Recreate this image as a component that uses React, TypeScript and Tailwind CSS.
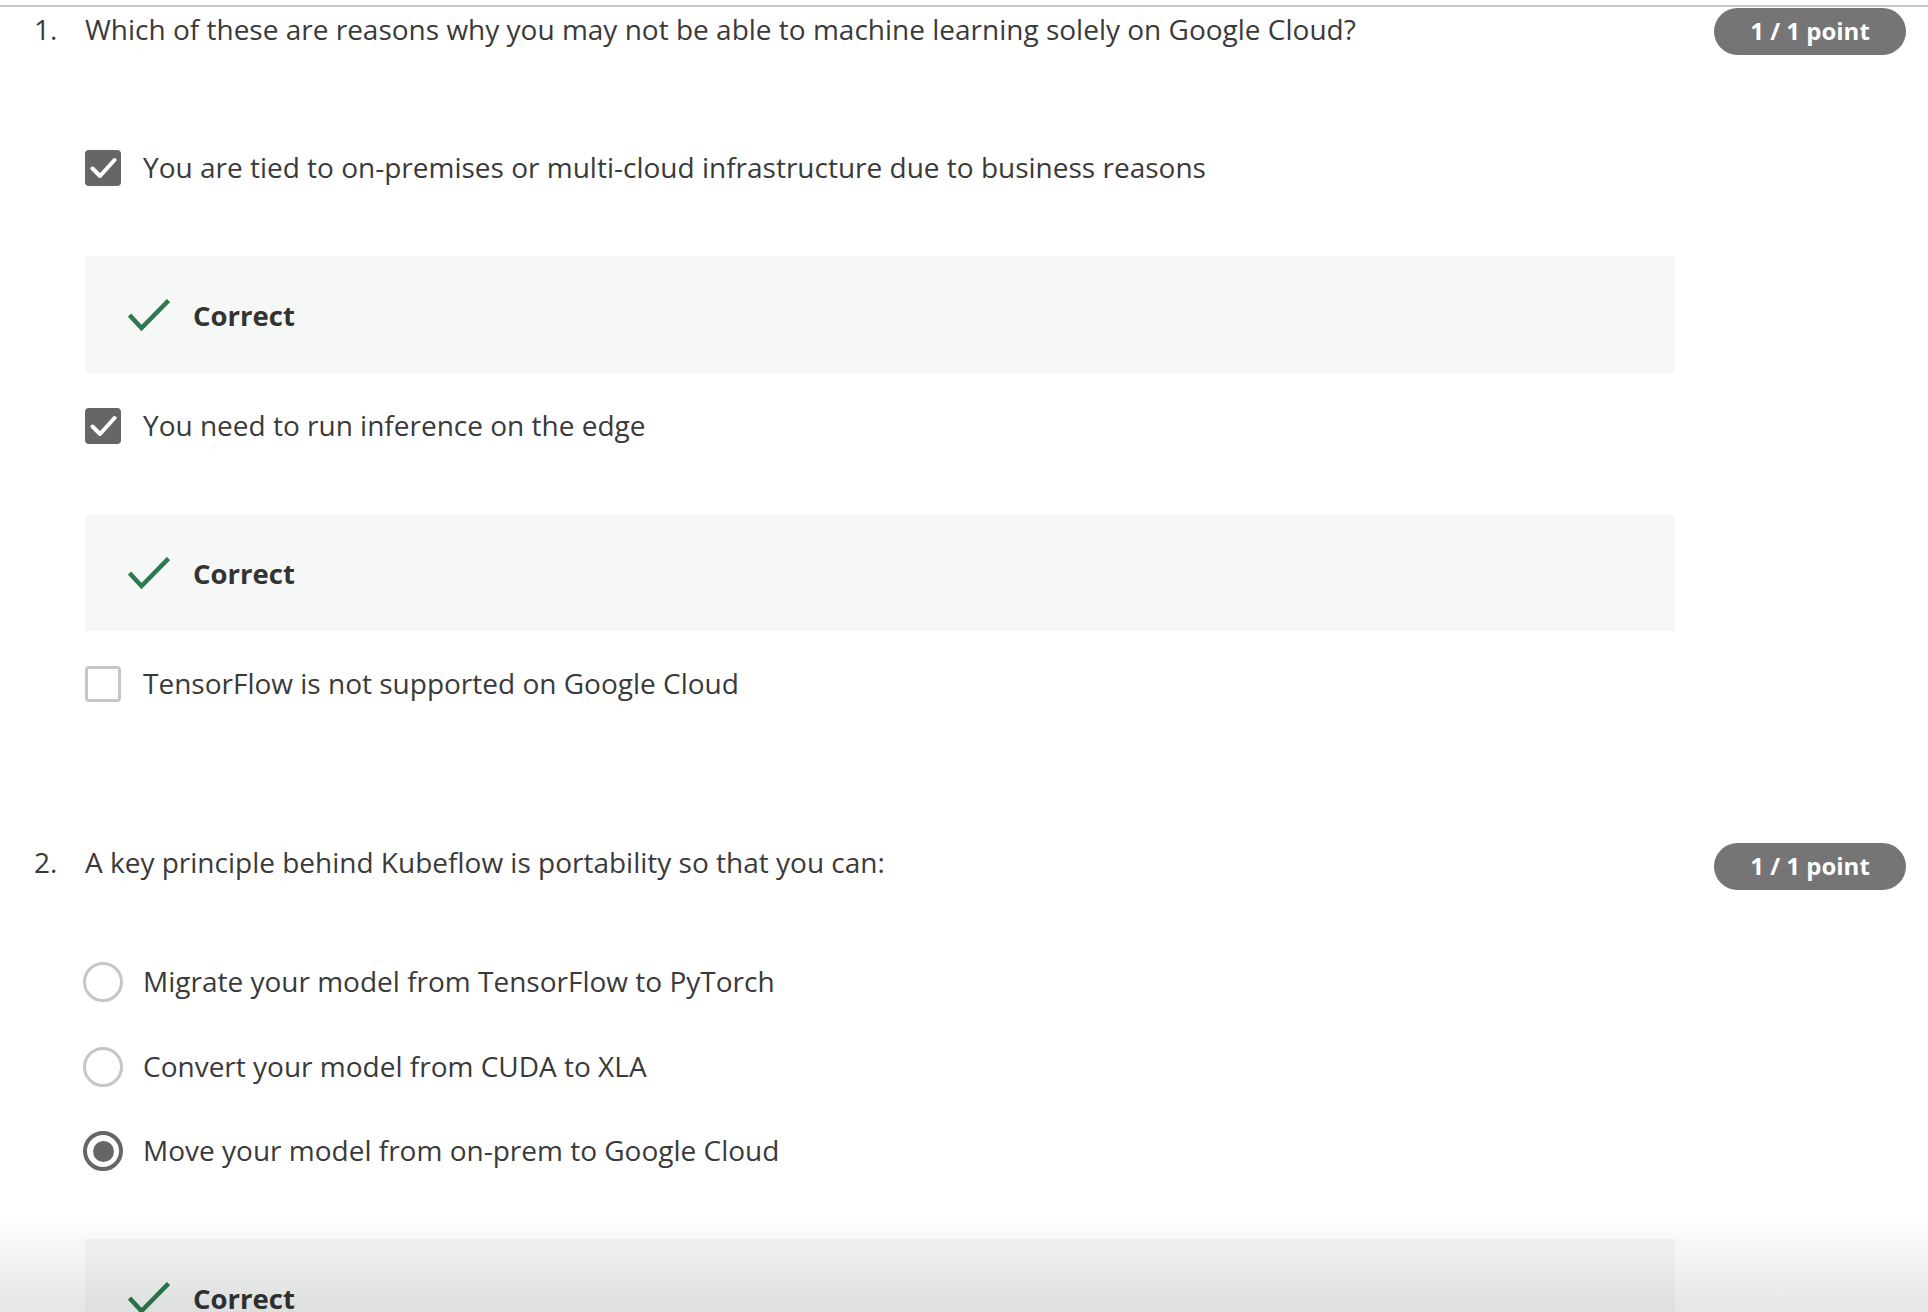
import React from "react";

interface Choice {
    text: string;
    selected: boolean;
    correct?: boolean;
}

const q1: Choice[] = [
    { text: "You are tied to on-premises or multi-cloud infrastructure due to business reasons", selected: true, correct: true },
    { text: "You need to run inference on the edge", selected: true, correct: true },
    { text: "TensorFlow is not supported on Google Cloud", selected: false },
];

const q2: Choice[] = [
    { text: "Migrate your model from TensorFlow to PyTorch", selected: false },
    { text: "Convert your model from CUDA to XLA", selected: false },
    { text: "Move your model from on-prem to Google Cloud", selected: true, correct: true },
];

const PointBadge = () => (
    <div className="h-[47px] w-[192px] shrink-0 rounded-full bg-[#757575] flex items-center justify-center text-white font-bold text-[24px] pb-[1px]">
        1 / 1 point
    </div>
);

const Checkbox: React.FC<{ checked: boolean }> = ({ checked }) =>
    checked ? (
        <div className="w-[36px] h-[36px] shrink-0 rounded-[4px] bg-[#666666] flex items-center justify-center">
            <svg width="27" height="22" viewBox="0 0 27 22" fill="none">
                <polyline points="2.5,11.5 10,19 24.5,3" stroke="white" strokeWidth="4" strokeLinecap="round" strokeLinejoin="round" />
            </svg>
        </div>
    ) : (
        <div className="w-[36px] h-[36px] shrink-0 rounded-[4px] border-[3px] border-[#c6c6c6] bg-white" />
    );

const Radio: React.FC<{ checked: boolean }> = ({ checked }) =>
    checked ? (
        <div className="w-[40px] h-[40px] shrink-0 rounded-full border-[4px] border-[#666666] flex items-center justify-center">
            <div className="w-[21px] h-[21px] rounded-full bg-[#666666]" />
        </div>
    ) : (
        <div className="w-[40px] h-[40px] shrink-0 rounded-full border-[3px] border-[#c6c6c6]" />
    );

const CorrectBox = ({ className = "" }: { className?: string }) => (
    <div className={`w-[1590px] h-[117px] bg-[#f6f8f7] flex items-center pl-[43px] gap-[23px] ${className}`}>
        <svg width="42" height="32" viewBox="0 0 42 32" fill="none">
            <polyline points="1.5,16 13.5,29 40.5,1.5" stroke="#2d7a4f" strokeWidth="4.5" />
        </svg>
        <span className="text-[27.5px] font-bold text-[#333333] mt-[2px]">Correct</span>
    </div>
);

const QuestionHead: React.FC<{ num: number; text: string; top: string }> = ({ num, text, top }) => (
    <div className="flex items-start pl-[34px] pr-[22px]">
        <span className={`w-[51px] shrink-0 text-[28px] leading-[38px] ${top}`}>{num}.</span>
        <p className={`flex-1 text-[28px] leading-[38px] ${top}`}>{text}</p>
        <PointBadge />
    </div>
);

export default function App() {
    return (
        <div className="relative h-[1312px] overflow-hidden bg-white font-['Open_Sans',sans-serif] text-[#3a3a3a]">
            <div className="mt-[5px] border-t-2 border-[#c6c6c6]" />

            <div className="mt-[1px]">
                <QuestionHead num={1} top="mt-[2px]" text="Which of these are reasons why you may not be able to machine learning solely on Google Cloud?" />
                <div className="ml-[85px] mt-[95px] flex flex-col">
                    {q1.map((c, i) => (
                        <div key={i} className={i > 0 ? "mt-[35px]" : ""}>
                            <div className="h-[36px] flex items-center gap-[22px]">
                                <Checkbox checked={c.selected} />
                                <span className="text-[28px] leading-[38px] pb-[2px]">{c.text}</span>
                            </div>
                            {c.correct && <CorrectBox className="mt-[70px]" />}
                        </div>
                    ))}
                </div>
            </div>

            <div className="mt-[141px]">
                <QuestionHead num={2} top="mt-[0px]" text="A key principle behind Kubeflow is portability so that you can:" />
                <div className="ml-[83px] mt-[72px] flex flex-col gap-[44.5px]">
                    {q2.map((c, i) => (
                        <div key={i} className="h-[40px] flex items-center gap-[20px]">
                            <Radio checked={c.selected} />
                            <span className="text-[28px] leading-[38px] pb-[2px]">{c.text}</span>
                        </div>
                    ))}
                </div>
                <CorrectBox className="ml-[85px] mt-[68px]" />
            </div>

            <div className="pointer-events-none absolute inset-x-0 bottom-0 h-[100px] bg-gradient-to-b from-transparent to-[rgba(0,0,0,0.1)]" />
        </div>
    );
}
